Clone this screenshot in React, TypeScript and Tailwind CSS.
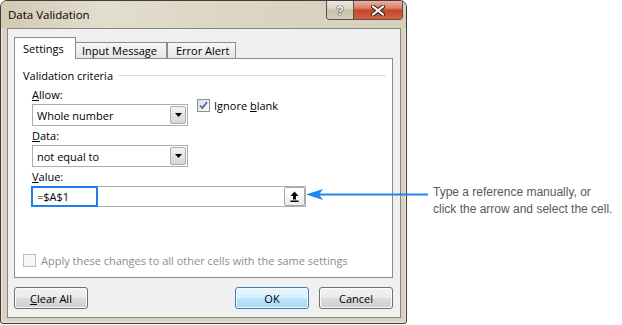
import React from "react";

const ui: React.CSSProperties = { fontFamily: '"Open Sans", "Noto Sans", sans-serif' };

function ComboBox({ value }: { value: string }) {
  return (
    <div className="flex h-[22px] w-[156px] items-center border border-[#abadb3] bg-white">
      <span className="flex-1 pl-[4px] text-[11px] leading-[15px] text-black">{value}</span>
      <div className="mr-px flex h-[18px] w-[16px] items-center justify-center rounded-[2px] border border-[#acacac] bg-[linear-gradient(#f4f4f4,#e4e4e4_50%,#d6d6d6)]">
        <svg width="7" height="4" viewBox="0 0 7 4">
          <path d="M0 0h7L3.5 4z" fill="#000" />
        </svg>
      </div>
    </div>
  );
}

function WinButton({ children, primary }: { children: React.ReactNode; primary?: boolean }) {
  return (
    <div
      className={
        "flex h-[22px] w-[74px] items-center justify-center rounded-[3px] border text-[11px] leading-[15px] text-black " +
        (primary
          ? "border-[#3c7fb1] bg-[linear-gradient(#eaf6fd_0%,#d9f0fc_50%,#bee6fd_50%,#a7d9f5_100%)] shadow-[inset_0_0_0_1px_#f4fbff]"
          : "border-[#707070] bg-[linear-gradient(#f2f2f2_0%,#ebebeb_50%,#dddddd_50%,#cfcfcf_100%)] shadow-[inset_0_0_0_1px_#fbfbfb]")
      }
    >
      {children}
    </div>
  );
}

function Label({ children }: { children: React.ReactNode }) {
  return <div className="h-[17px] text-[11px] leading-[17px] text-black">{children}</div>;
}

export default function App() {
  return (
    <div className="relative h-[325px] w-[622px] overflow-hidden bg-white" style={ui}>
      <div className="flex">
        {/* Window */}
        <div className="flex h-[324px] w-[407px] flex-col rounded-t-[7px] rounded-b-[3px] border border-[#3d3d3d] bg-[#dad3c0] shadow-[inset_0_0_0_1px_#ece7da]">
          {/* Title bar */}
          <div className="flex h-[27px] rounded-t-[6px] bg-[linear-gradient(90deg,#d2c9b2_0%,#e3ddce_25%,#dcd5c3_60%,#d6cfbb_100%)]">
            <div className="flex-1 pl-[7px] pt-[6px] text-[11.5px] leading-[16px] text-black">Data Validation</div>
            <div className="mr-[3px] flex h-[19px] overflow-hidden rounded-b-[4px] border border-t-0 border-[#55524b]">
              <div className="flex w-[27px] items-center justify-center border-r border-[#55524b] bg-[linear-gradient(#ece8df_0%,#dcd6c8_45%,#c9c1ae_50%,#d4cdbb_100%)]">
                <span
                  className="text-[13px] font-bold leading-[13px] text-white [text-shadow:0_0_1px_#333,0_0_1px_#333,0_0_1px_#333]"
                  style={{ fontFamily: '"Liberation Sans", Arial, sans-serif' }}
                >
                  ?
                </span>
              </div>
              <div className="flex w-[48px] items-center justify-center bg-[linear-gradient(#eab1a2_0%,#dc7d66_40%,#c8462b_50%,#d35f40_100%)]">
                <svg width="14" height="11" viewBox="0 0 14 11">
                  <path d="M2 1.5l10 8M12 1.5l-10 8" stroke="#3b2a25" strokeWidth="4.2" strokeLinecap="round" />
                  <path d="M2 1.5l10 8M12 1.5l-10 8" stroke="#fff" strokeWidth="2.2" strokeLinecap="round" />
                </svg>
              </div>
            </div>
          </div>

          {/* Client area */}
          <div className="ml-[6px] flex h-[290px] w-[394px] flex-col border border-[#858585] bg-[#f0f0f0] pl-[6px] pt-[8px]">
            {/* Tabs */}
            <div className="flex h-[21px] items-end text-[11px] leading-[15px] text-black">
              <div className="relative z-10 -mb-px h-[22px] w-[62px] border border-b-0 border-[#898c95] bg-white pl-[8px] pt-[3px]">
                Settings
              </div>
              <div className="h-[16px] w-[91px] border border-b-0 border-l-0 border-[#898c95] bg-[linear-gradient(#f6f6f6,#e6e6e6)] pl-[6px]">
                Input Message
              </div>
              <div className="h-[16px] w-[69px] border border-b-0 border-[#898c95] bg-[linear-gradient(#f6f6f6,#e6e6e6)] pl-[8px]">
                Error Alert
              </div>
            </div>

            {/* Tab panel */}
            <div className="flex h-[220px] w-[379px] flex-col border border-[#898c95] bg-white pl-[8px] pr-[6px] pt-[8px]">
              <div className="flex h-[17px] items-center">
                <span className="text-[11px] leading-[17px] text-black">Validation criteria</span>
                <div className="ml-[5px] h-px flex-1 bg-[#d5dfe5]" />
              </div>

              <div className="ml-[9px] mt-[2px] flex flex-col">
                <div className="flex">
                  <div className="flex flex-col">
                    <Label>
                      <span className="underline">A</span>llow:
                    </Label>
                    <div className="mt-px">
                      <ComboBox value="Whole number" />
                    </div>
                  </div>
                  <div className="ml-[9px] mt-[11px] flex h-[17px] items-center">
                    <div className="flex h-[13px] w-[13px] items-center justify-center border border-[#8e8f8f] bg-[linear-gradient(135deg,#dcdcdc,#fbfbfb)]">
                      <svg width="9" height="9" viewBox="0 0 9 9">
                        <path d="M1 4.5l2.4 2.6L8 1" fill="none" stroke="#4e6eaa" strokeWidth="1.8" />
                      </svg>
                    </div>
                    <span className="ml-[4px] text-[11px] leading-[17px] text-black">
                      Ignore <span className="underline">b</span>lank
                    </span>
                  </div>
                </div>

                <div className="mt-px">
                  <Label>
                    <span className="underline">D</span>ata:
                  </Label>
                </div>
                <div className="mt-px">
                  <ComboBox value="not equal to" />
                </div>

                <div className="mt-px">
                  <Label>
                    <span className="underline">V</span>alue:
                  </Label>
                </div>
                <div className="relative mt-px flex h-[21px] w-[274px] items-center border border-[#abadb3] bg-white">
                  <span className="flex-1 pl-[4px] text-[11px] leading-[15px] text-black">=$A$1</span>
                  <div className="flex h-[19px] w-[21px] items-center justify-center rounded-[2px] border border-[#a9a9a9] bg-[linear-gradient(#ffffff,#ececec)]">
                    <svg width="9" height="11" viewBox="0 0 9 11">
                      <path d="M4.5 0.5L0.5 5h2.5v3.5h3V5h2.5z" fill="#000" />
                      <rect x="0.5" y="9.5" width="8" height="1.5" fill="#000" />
                    </svg>
                  </div>
                  <div className="absolute left-[-2px] top-[-1px] h-[21px] w-[67px] border-2 border-[#1d7fe9]" />
                </div>
              </div>

              <div className="mb-[8px] mt-auto flex h-[17px] items-center">
                <div className="h-[13px] w-[13px] border border-[#bdbdbd] bg-[#f7f7f7]" />
                <span className="ml-[5px] text-[11px] leading-[17px] text-[#8d8d8d]">
                  Apply these changes to all other cells with the same settings
                </span>
              </div>
            </div>

            {/* Buttons */}
            <div className="mt-[9px] flex w-[379px]">
              <WinButton>
                <span>
                  <span className="underline">C</span>lear All
                </span>
              </WinButton>
              <div className="flex-1" />
              <WinButton primary>OK</WinButton>
              <div className="ml-[10px]">
                <WinButton>Cancel</WinButton>
              </div>
            </div>
          </div>
        </div>

        {/* Annotation */}
        <div
          className="ml-[26px] pt-[184px] text-[12px] leading-[17px] text-[#595959]"
          style={{ fontFamily: '"Liberation Sans", Arial, sans-serif' }}
        >
          <div className="whitespace-nowrap">Type a reference manually, or</div>
          <div className="whitespace-nowrap">click the arrow and select the cell.</div>
        </div>
      </div>

      {/* Callout arrow */}
      <svg className="absolute left-[305px] top-[188px]" width="124" height="13" viewBox="0 0 124 13">
        <line x1="14" y1="6.5" x2="123" y2="6.5" stroke="#1e86f0" strokeWidth="2" />
        <path d="M1 6.5L18 1L14 6.5L18 12z" fill="#1e86f0" />
      </svg>
    </div>
  );
}
